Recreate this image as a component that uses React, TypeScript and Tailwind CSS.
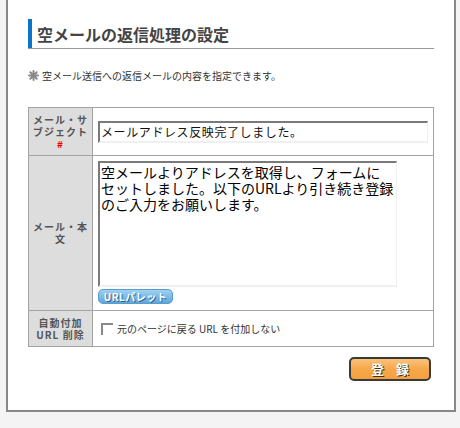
import React from 'react';

const jp = { fontFamily: '"Noto Sans CJK JP", "Liberation Sans", sans-serif' };

function GearMark() {
  return (
    <svg width="11" height="11" viewBox="0 0 11 11" className="shrink-0">
      <g stroke="#8a8a8a" strokeWidth="2" strokeLinecap="round">
        <line x1="5.5" y1="1" x2="5.5" y2="10" />
        <line x1="1" y1="5.5" x2="10" y2="5.5" />
        <line x1="2.3" y1="2.3" x2="8.7" y2="8.7" />
        <line x1="8.7" y1="2.3" x2="2.3" y2="8.7" />
      </g>
      <circle cx="5.5" cy="5.5" r="2.4" fill="#8a8a8a" />
    </svg>
  );
}

function Label({ children }: { children: React.ReactNode }) {
  return (
    <td className="w-[64px] border border-[#a3a3a3] bg-[#dddddd] p-0 text-center align-middle">
      <div className="text-[10px] font-bold leading-[12px] tracking-[1px] text-[#555]">{children}</div>
    </td>
  );
}

const bodyText =
  '空メールよりアドレスを取得し、フォームに\nセットしました。以下のURLより引き続き登録\nのご入力をお願いします。';

export default function App() {
  return (
    <div className="h-[428px] w-[460px] bg-[#f4f4f4]" style={jp}>
      <div className="ml-[6px] h-[412px] w-[450px] border-x-2 border-b-2 border-[#888] bg-white px-[20px] pt-[19px]">
        <div className="flex h-[30px] items-stretch border-b border-[#999]">
          <div className="w-[4px] bg-[#0a74c9]" />
          <h1 className="flex items-center pl-[5px] text-[16px] font-bold text-[#444]">空メールの返信処理の設定</h1>
        </div>

        <div className="mt-[19px] flex items-center gap-[3px] text-[10px] text-[#333]">
          <GearMark />
          <span>空メール送信への返信メールの内容を指定できます。</span>
        </div>

        <table className="mt-[24px] w-[406px] border-collapse border border-[#999]">
          <tbody>
            <tr className="h-[48px]">
              <Label>
                メール・サ<br />ブジェクト<br />
                <span className="text-[#e00]">#</span>
              </Label>
              <td className="border border-[#a3a3a3] px-[5px] align-middle">
                <input
                  readOnly
                  value="メールアドレス反映完了しました。"
                  className="block h-[22px] w-[330px] border-t-2 border-l-2 border-r border-b-2 border-t-[#7a7a7a] border-l-[#7a7a7a] border-r-[#f0f0f0] border-b-[#f0f0f0] px-[1px] text-[12px] tracking-[0.6px] text-[#111] outline-none"
                  style={jp}
                />
              </td>
            </tr>
            <tr className="h-[155px]">
              <Label>
                メール・本<br />文
              </Label>
              <td className="border border-[#a3a3a3] px-[5px] pt-[5px] align-top">
                <textarea
                  readOnly
                  value={bodyText}
                  className="block h-[126px] w-[299px] resize-none overflow-hidden whitespace-pre border-t-2 border-l-2 border-r border-b-2 border-t-[#7a7a7a] border-l-[#7a7a7a] border-r-[#f0f0f0] border-b-[#f0f0f0] px-[1px] pt-[1px] text-[14px] leading-[16px] text-black outline-none"
                  style={jp}
                />
                <button
                  className="mt-[2px] flex h-[15px] w-[75px] items-center justify-center rounded-[5px] border border-[#5a9ccc] bg-gradient-to-b from-[#9fd0f0] to-[#5ea8dc] text-[10px] font-bold leading-none tracking-[0.5px] text-white"
                  style={{ textShadow: '1px 1px 0 #2e5f85' }}
                >
                  URLパレット
                </button>
              </td>
            </tr>
            <tr className="h-[36px]">
              <Label>
                自動付加<br />URL 削除
              </Label>
              <td className="border border-[#a3a3a3] px-[8px] align-middle">
                <label className="flex items-end gap-[4px] text-[10px] text-[#333]">
                  <span className="mb-[1px] block h-[12px] w-[12px] border-t-2 border-l-2 border-t-[#888] border-l-[#888] bg-white" />
                  <span>元のページに戻る URL を付加しない</span>
                </label>
              </td>
            </tr>
          </tbody>
        </table>

        <div className="mt-[10px] flex justify-end pr-[3px]">
          <button
            className="flex h-[24px] w-[82px] items-center justify-center rounded-[5px] border-2 border-[#3a3a3a] bg-gradient-to-b from-[#fbc27a] via-[#f7a84a] to-[#f5a040] text-[13px] font-bold tracking-[12px] text-white"
            style={{ textShadow: '1px 1px 0 #4a3000' }}
          >
            <span className="pl-[12px]">登録</span>
          </button>
        </div>
      </div>
    </div>
  );
}
